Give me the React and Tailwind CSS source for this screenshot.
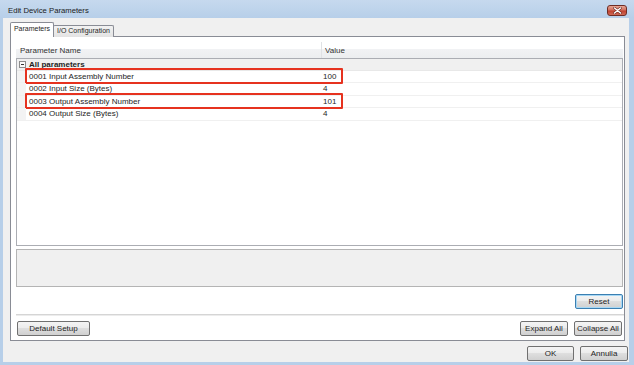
import React from "react";

function Btn({ children, className = "", focused = false }) {
  return (
    <div
      className={
        "flex items-center justify-center whitespace-nowrap rounded-[2px] border text-[8px] text-[#1e1e1e] bg-[linear-gradient(to_bottom,#f4f4f4,#ececec_45%,#dedede_50%,#d0d0d0)] " +
        (focused ? "border-[#3c7fb1] shadow-[inset_0_0_0_1px_#a7d8f5] " : "border-[#707070] ") +
        className
      }
    >
      {children}
    </div>
  );
}

function Row({ name, value, boxed, h }) {
  return (
    <div className={"relative flex border-b border-[#f0f0f0] " + h}>
      <div className="w-[9px] shrink-0 bg-[#f3f3f3]" />
      <div className="w-[296px] shrink-0 pl-[3px] flex items-center whitespace-nowrap">{name}</div>
      <div className="pl-[1px] flex items-center">{value}</div>
      {boxed && (
        <div className="absolute left-[8px] top-[-3px] w-[318px] h-[16px] border-2 border-[#e6321f] rounded-[1px]" />
      )}
    </div>
  );
}

export default function App() {
  return (
    <div
      className="w-[634px] h-[365px] flex flex-col bg-[#b7cfe9] pl-[3px] pr-[5px] pb-[3px] text-[8px] text-[#1e1e1e] overflow-hidden"
      style={{ fontFamily: '"Liberation Sans", Arial, sans-serif' }}
    >
      {/* Title bar */}
      <div className="h-[18px] -ml-[3px] -mr-[5px] flex items-center pt-[3px] pl-[8px] pr-[7px] bg-[linear-gradient(to_bottom,#c6d9ee,#b7cfe9)]">
        <span className="text-[7.7px] text-[#1a1a1a] whitespace-nowrap">Edit Device Parameters</span>
        <div className="ml-auto w-[20px] h-[11px] rounded-[3px] border border-[#6e2c24] bg-[linear-gradient(to_bottom,#e8a594,#d0705f_45%,#c0402f_55%,#cf6a56)] flex items-center justify-center">
          <svg width="9" height="7" viewBox="0 0 9 7">
            <path d="M1.5 1 L7.5 6 M7.5 1 L1.5 6" stroke="#6b2a22" strokeWidth="2.6" strokeLinecap="round" />
            <path d="M1.5 1 L7.5 6 M7.5 1 L1.5 6" stroke="#ffffff" strokeWidth="1.5" strokeLinecap="round" />
          </svg>
        </div>
      </div>

      {/* Client */}
      <div className="flex-1 bg-[#f0f0f0] flex flex-col pt-[4px] pl-[7px] pr-[4px]">
        {/* Tabs */}
        <div className="flex items-end h-[15px] relative z-10">
          <div className="h-[15px] w-[44px] bg-white border border-[#898c95] border-b-0 rounded-t-[2px] flex items-center justify-center pb-[1px] text-[7px] whitespace-nowrap">
            Parameters
          </div>
          <div className="h-[12px] w-[61px] -ml-[1px] bg-[linear-gradient(to_bottom,#f2f2f2,#e3e3e3)] border border-[#898c95] border-b-0 rounded-t-[2px] flex items-center justify-center text-[7px] whitespace-nowrap">
            I/O Configuration
          </div>
        </div>

        {/* Tab panel */}
        <div className="-mt-[1px] h-[305px] bg-white border border-[#898c95] flex flex-col pl-[5px] pr-[1px] pt-[5px]">
          {/* Header */}
          <div className="h-[16px] flex text-[#333] bg-[linear-gradient(to_bottom,#ffffff_45%,#f1f2f4_45%,#eceef0)]">
            <div className="w-[306px] pl-[4px] pt-[1px] flex items-center border-r border-[#e0e2e5]">Parameter Name</div>
            <div className="pl-[3px] pt-[1px] flex items-center">Value</div>
          </div>
          {/* List box */}
          <div className="h-[188px] border border-[#abadb3] bg-white flex flex-col">
            <div className="h-[12px] flex items-center bg-[#f0f0f0] border-b border-[#e8e8e8]">
              <div className="w-[11px] flex items-center justify-center">
                <svg width="7" height="7" viewBox="0 0 7 7">
                  <rect x="0.5" y="0.5" width="6" height="6" fill="#fafafa" stroke="#8c8c8c" />
                  <path d="M2 3.5 H5" stroke="#333" strokeWidth="1" />
                </svg>
              </div>
              <span className="pl-[1px] font-bold text-[8px]">All parameters</span>
            </div>
            <Row name="0001 Input Assembly Number" value="100" boxed h="h-[12px]" />
            <Row name="0002 Input Size (Bytes)" value="4" h="h-[13px]" />
            <Row name="0003 Output Assembly Number" value="101" boxed h="h-[12px]" />
            <Row name="0004 Output Size (Bytes)" value="4" h="h-[13px]" />
          </div>

          {/* Description */}
          <div className="mt-[3px] h-[38px] bg-[#f0f0f0] border border-[#b4b4b4]" />

          {/* Reset */}
          <div className="mt-[7px] flex justify-end">
            <Btn focused className="w-[48px] h-[15px]">Reset</Btn>
          </div>

          {/* Separator */}
          <div className="mt-[5px] -mr-[1px] h-[2px] border-t border-[#d5d5d5] bg-[#ececec]" />

          {/* Bottom buttons */}
          <div className="mt-[5px] flex items-center pr-[1px]">
            <Btn className="ml-[1px] w-[73px] h-[15px]">Default Setup</Btn>
            <Btn className="ml-auto w-[48px] h-[15px]">Expand All</Btn>
            <Btn className="ml-[6px] w-[48px] h-[15px]">Collapse All</Btn>
          </div>
        </div>

        {/* Dialog buttons */}
        <div className="mt-[5px] flex justify-end gap-[6px] -mr-[3px]">
          <Btn className="w-[47px] h-[15px]">OK</Btn>
          <Btn className="w-[48px] h-[15px]">Annulla</Btn>
        </div>
      </div>
    </div>
  );
}
